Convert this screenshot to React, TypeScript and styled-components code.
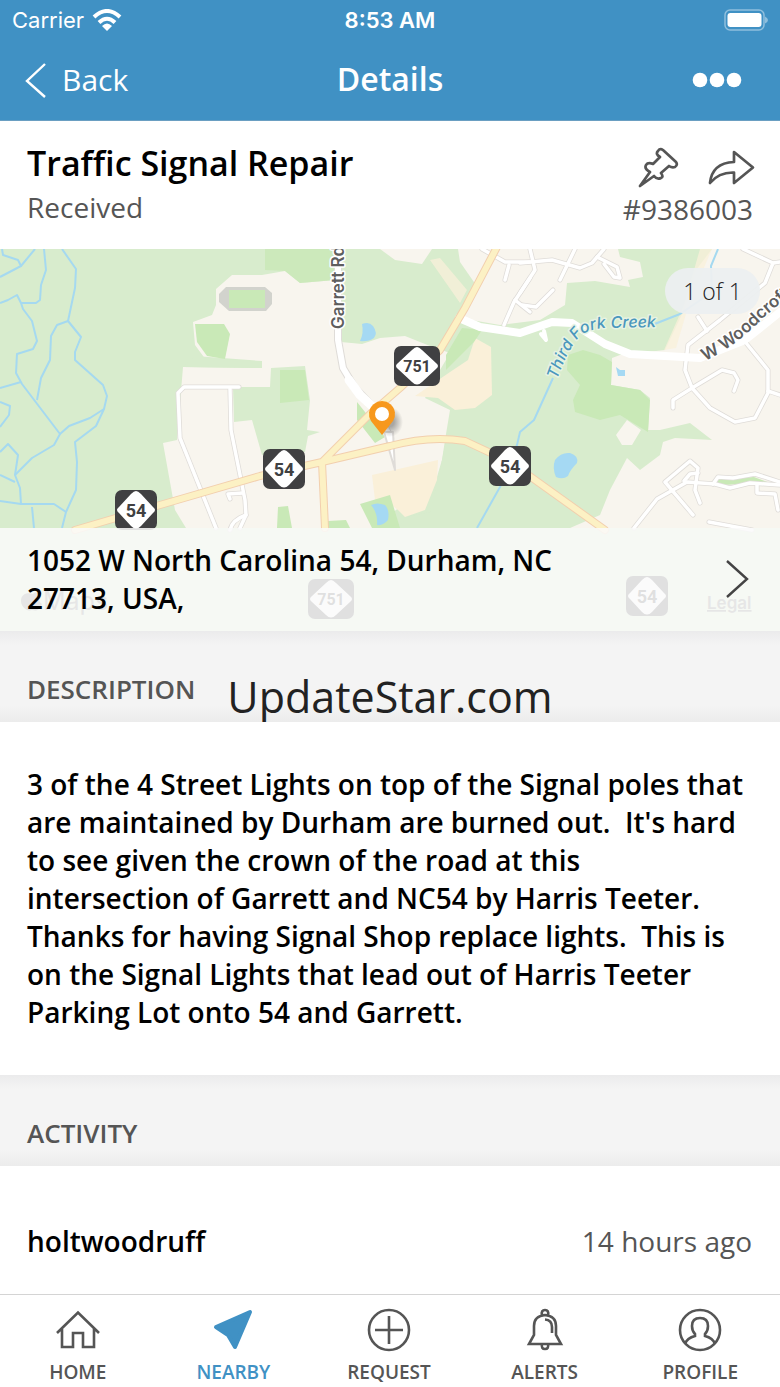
import React from "react";
import styled, { createGlobalStyle } from "styled-components";

const blue = "#4091c4";
const grey = "#555555";

const GlobalStyle = createGlobalStyle`
  * { box-sizing: border-box; }
  body {
    margin: 0;
    background: #ffffff;
    color: #000000;
    font-family: "Open Sans", "Noto Sans", sans-serif;
  }
  button { font: inherit; color: inherit; border: 0; padding: 0; background: none; cursor: pointer; }
  h1, h2, h3, p { margin: 0; }
`;

const Screen = styled.div`
  display: flex;
  flex-direction: column;
  min-height: 100vh;
`;

const Header = styled.header`
  background: ${blue};
  color: #ffffff;
  border-bottom: 1px solid #6a9fc2;
`;

const ThreeColumns = styled.div`
  display: grid;
  grid-template-columns: 1fr auto 1fr;
  align-items: center;
`;

const StatusBar = styled(ThreeColumns)`
  height: 39px;
  padding: 0 12px;
  font-family: Inter, Roboto, sans-serif;
  font-size: 22px;
`;

const Carrier = styled.span`
  display: flex;
  align-items: center;
  gap: 8px;
`;

const Clock = styled.span`
  font-weight: 600;
`;

const RightIcon = styled.svg`
  display: block;
  justify-self: end;
`;

const NavBar = styled(ThreeColumns)`
  height: 81px;
  padding: 0 24px;
`;

const BackButton = styled.button`
  display: flex;
  align-items: center;
  gap: 14px;
  justify-self: start;
  font-size: 30px;
  line-height: 40px;
`;

const NavTitle = styled.h1`
  font-size: 32px;
  line-height: 42px;
  padding-bottom: 2px;
  font-weight: 600;
`;

const MoreButton = styled.button`
  justify-self: end;
  margin-right: 14px;
`;

const Summary = styled.section`
  display: flex;
  justify-content: space-between;
  padding: 21px 27px 20px;
  height: 128px;
`;

const SummaryTitle = styled.h2`
  font-size: 34px;
  line-height: 42px;
  font-weight: 600;
`;

const Muted = styled.p`
  font-size: 28px;
  line-height: 46px;
  color: ${grey};
`;

const SummarySide = styled.div`
  display: flex;
  flex-direction: column;
  align-items: flex-end;
`;

const Actions = styled.div`
  display: flex;
  gap: 28px;
  height: 44px;
  padding-top: 5px;
  margin-right: -2px;
`;

const MapCard = styled.section`
  display: grid;
  overflow: hidden;
`;

const MapDrawing = styled.svg`
  grid-area: 1 / 1;
  display: block;
  width: 100%;
  height: 382px;
`;

const Counter = styled.span`
  grid-area: 1 / 1;
  align-self: start;
  justify-self: end;
  margin: 19px 20px 0 0;
  width: 95px;
  border-radius: 24px;
  background: rgba(236, 239, 240, 0.95);
  color: #222222;
  font-size: 23px;
  line-height: 46px;
  font-weight: 300;
  text-align: center;
`;

const AddressBar = styled.button`
  grid-area: 1 / 1;
  align-self: end;
  display: flex;
  align-items: center;
  justify-content: space-between;
  height: 103px;
  padding: 0 31px 2px 27px;
  background: rgba(250, 250, 250, 0.86);
  text-align: left;
`;

const Address = styled.span`
  max-width: 560px;
  font-size: 28px;
  line-height: 38px;
  font-weight: 600;
`;

const SectionHeading = styled.div`
  position: relative;
  overflow: hidden;
  height: 91px;
  padding: 39px 27px 0;
  background: linear-gradient(#ebebec, #f4f4f4 14px, #f4f4f4 74px, #ececec);
`;

const SectionTitle = styled.h3`
  font-size: 26px;
  line-height: 38px;
  font-weight: 600;
  color: ${grey};
`;

const Watermark = styled.span`
  position: absolute;
  inset: 35px 0 0;
  font-size: 43px;
  line-height: 62px;
  text-align: center;
  color: #222222;
`;

const Description = styled.p`
  padding: 43px 32px 44px 27px;
  font-size: 28px;
  line-height: 38px;
  font-weight: 600;
  white-space: pre-wrap;
`;

const ActivityRow = styled.article`
  display: flex;
  flex: 1;
  justify-content: space-between;
  padding: 56px 28px 34px 27px;
  font-size: 28px;
  line-height: 38px;
`;

const Author = styled.span`
  font-weight: 600;
`;

const When = styled.time`
  color: ${grey};
`;

const TabBar = styled.nav`
  position: sticky;
  bottom: 0;
  display: grid;
  grid-template-columns: repeat(5, 1fr);
  height: 93px;
  padding-right: 2px;
  border-top: 1px solid #d4d4d4;
  background: #ffffff;
`;

const Tab = styled.button<{ $active?: boolean }>`
  display: flex;
  flex-direction: column;
  align-items: center;
  padding-top: 13px;
  gap: 8px;
  font-size: 19px;
  line-height: 24px;
  font-weight: 600;
  color: ${(p) => (p.$active ? blue : grey)};
`;

const TabIcon = styled.svg`
  display: block;
  width: 46px;
  height: 44px;
  fill: none;
  stroke: currentColor;
  stroke-width: 2.6;
`;

const cream = "#f8f5ee";
const park = "#c9e9b7";
const sand = "#faf0d9";

function Shield({ x, y, label }: { x: number; y: number; label: string }) {
  const wide = label.length > 2;
  const half = wide ? 23 : 21;
  return (
    <g transform={`translate(${x} ${y})`}>
      <rect x={-half} y={-20} width={half * 2} height={40} rx={7} fill="#404042" />
      <path d={`M0-19Q2-19 5-16L${half - 4}-3Q${half} 0 ${half - 4} 3L5 16Q0 21-5 16L${4 - half} 3Q${-half} 0 ${4 - half}-3L-5-16Q-2-19 0-19Z`} fill="#fff" />
      <text
        y={wide ? 6 : 7}
        textAnchor="middle"
        fontFamily="Roboto, sans-serif"
        fontWeight="700"
        fontSize={wide ? 16 : 18}
        fill="#404042"
      >
        {label}
      </text>
    </g>
  );
}

const streams = [
  "M0 277L21 266L35 249",
  "M2 249L3 255L18 260L21 266",
  "M44 249L46 270L41 285L40 300L36 303L21 303",
  "M0 303L8 300L17 295L21 303L23 309L32 321L37 341L33 349L17 354L16 373L22 384L60 434L54 445L32 458L15 475",
  "M62 249L76 269L75 288L68 321L81 337L75 352L75 360L103 385L107 396L104 409L96 426L75 442L77 462L76 490L66 512L62 528",
  "M68 321L57 325L51 336L50 360L41 378L37 400",
  "M60 434L69 426L90 418L104 409",
  "M0 388L21 382",
  "M0 402L10 406L9 415L0 427",
  "M0 452L8 444L18 455L15 475L20 488L21 504L0 501",
  "M0 475L15 482",
  "M21 504L54 504L66 512",
  "M32 507L34 528",
];

const streets = [
  "M216 528L180 438L178 393L184 387L239 387",
  "M230 389L231 430L245 500L246 515L240 528",
  "M243 493L228 494L230 499",
  "M246 515Q232 520 230 530",
  "M520 263L552 260L580 268L592 263L604 249",
  "M530 249L535 270L520 293",
  "M575 249L560 280",
  "M597 257L617 267L620 278L614 277L604 264",
  "M522 305L536 307L553 290",
  "M482 249L505 262L530 262",
  "M509 265L505 280",
  "M530 278L514 302L504 325",
  "M515 300L530 312",
  "M743 249L773 263L780 262",
  "M773 263L765 283L720 320L688 345L685 370L692 388L673 400L673 408",
  "M692 388L722 370L734 373L738 380L734 391",
  "M692 388L710 408L735 422L755 418L768 393L768 370L742 338",
  "M768 391L780 395",
  "M698 317L707 331",
  "M634 528L657 499L687 482L715 484L730 488L750 483L780 485",
  "M693 515L665 482L690 461L698 468L695 490L700 503",
  "M713 484L718 477L733 478L755 474L780 482",
  "M684 481L690 474L698 473",
  "M757 484L757 493L775 494L778 510",
  "M709 522L752 530",
];

function TownMap() {
  return (
    <MapDrawing viewBox="0 249 780 382" preserveAspectRatio="xMidYMid slice" role="img" aria-label="Map of the reported location">
      <defs>
        <radialGradient id="pin-shadow">
          <stop offset="0.3" stopColor="#666" stopOpacity="0.55" />
          <stop offset="1" stopColor="#666" stopOpacity="0" />
        </radialGradient>
      </defs>
      <rect y="249" width="780" height="382" fill="#d8eccd" />
      <g fill={cream}>
        <path d="M216 289L232 275L262 275L285 271L300 283L335 280L341 342L362 344L380 338L405 336L430 346L450 353L440 370L425 398L450 410L445 440L442 460L436 480L372 528L186 528L175 510L163 443L177 440L183 367L260 368L260 363L206 360L195 345L193 322L212 315L216 305Z" />
        <path d="M380 249L395 260L422 264L432 249Z" />
        <path d="M458 249L460 262L476 285L460 318L500 325L540 320L565 305L567 283L595 281L630 287L628 280L643 277L640 262L620 257L618 249Z" />
        <path d="M712 249L696 270L684 310L665 350L620 355L612 358L611 385L640 390L650 398L648 430L660 430L690 423L712 440L675 438L663 442L660 455L640 470L627 458L610 490L600 515L570 528H780V249Z" />
      </g>
      <path d="M195 356L262 361L262 368L183 367ZM233 387L270 387L271 368L305 366L310 400L307 430L320 432L308 436L305 452L262 455L252 420L234 422Z" fill="#d8eccd" />
      <path d="M400 528L405 517L430 512L440 470L446 440L470 440L470 631L180 631V528Z" fill="#d8eccd" />
      <g fill={sand}>
        <path d="M475 338L491 347L492 395L475 408L455 410L438 398L415 396L450 372L468 360Z" />
        <path d="M372 475L438 460L437 480L425 510L405 517L398 510L385 500L375 500Z" />
        <path d="M430 260L460 303L467 290L440 258ZM700 249H712L690 300L676 348L664 350L684 305Z" opacity=".75" />
      </g>
      <g fill={park}>
        <path d="M265 249H335V280L300 283L285 271L265 270Z" opacity=".8" />
        <path d="M195 324H224L230 334L225 359L207 356L197 342Z" />
        <path d="M280 370L305 370L309 400L280 403Z" />
        <path d="M357 402L385 437L375 443L357 420ZM446 355L462 328L482 330L474 342L446 370Z" />
        <path d="M568 355L583 350L600 355L612 362L611 385L640 390L650 400L648 432L620 415L600 420L575 412L573 400L580 385L567 370Z" />
        <path d="M360 504L390 495L400 528H372ZM278 507L288 506L292 528H277ZM328 521L346 520L350 528H328Z" />
        <path d="M718 479L754 477L770 483L740 484L724 485L715 484Z" />
      </g>
      <path d="M616 435L627 420L641 430L632 445L622 445Z" fill={cream} />
      <path d="M226 287H265L272 293V304L266 311H229L219 302V294Z" fill="#d2d3cd" />
      <rect x="229" y="290" width="36" height="18" fill={park} />
      <g fill="#a5d9f3">
        <path d="M362 324Q369 321 373 326Q378 333 374 338Q368 342 360 341Q364 333 362 324Z" />
        <path d="M555 460Q561 452 570 453Q579 456 577 463Q570 470 568 476Q563 480 556 477Q552 468 555 460Z" />
        <path d="M371 505Q377 502 385 505Q390 510 388 520Q383 526 377 525Q378 513 371 505Z" />
        <path d="M616 367L620 370H625V376H618Z" />
      </g>
      <g fill="none" stroke="#a5d9f0" strokeWidth="2" strokeLinejoin="round">
        {streams.map((d) => (
          <path key={d} d={d} />
        ))}
        <path d="M718 249L711 266L712 292L680 314L652 325M553 378L534 420L520 432L517 445L500 487L477 528" />
      </g>
      <g fill="none" strokeLinejoin="round" strokeLinecap="round">
        <g stroke="#dfdcd8" strokeWidth="5">
          {streets.map((d) => (
            <path key={d} d={d} />
          ))}
        </g>
        <g stroke="#fff" strokeWidth="3.500">
          {streets.map((d) => (
            <path key={d} d={d} />
          ))}
        </g>
        <path d="M338 249V340L343 368L355 388L378 412L390 438" stroke="#dfdcd8" strokeWidth="8" />
        <path d="M338 249V340L343 368L355 388L378 412L390 438" stroke="#fff" strokeWidth="6" />
        <path d="M349 380L360 395L372 406" stroke="#fff" strokeWidth="9" />
        <path d="M384 432L395 470L393 432Z" stroke="#dfdcd8" strokeWidth="2" fill="#fff" />
        <path d="M459 318L480 327L520 333L552 322L572 323L605 344L630 354L700 358L745 340L780 312" stroke="#fff" strokeWidth="8" />
        <path d="M541 334L546 340L544 331" stroke="#fff" strokeWidth="4" />
        {[
          { color: "#f2cfae", width: 8 },
          { color: "#fcf1c4", width: 6 },
        ].map(({ color, width }) => (
          <path
            key={color}
            stroke={color}
            strokeWidth={width}
            d="M497 247L465 308L440 350L400 388L370 414L322 462L325 528M75 530L160 505L260 476L322 462L390 446Q430 435 465 441L510 462L605 530"
          />
        ))}
      </g>
      <g fontFamily="Inter, sans-serif" fontSize="17" fontWeight="600" stroke="#fff" strokeWidth="3" paintOrder="stroke" strokeLinejoin="round">
        <path id="creek-label" d="M557 380Q568 348 581 335Q590 329 606 328L665 327" fill="none" stroke="none" />
        <path id="street-label" d="M705 361Q735 347 763 318L830 262" fill="none" stroke="none" />
        <text transform="translate(344 329) rotate(-90)" fill="#5e5e5e">
          Garrett Rd
        </text>
        <text fontSize="16" fontWeight="500" fontStyle="italic" fill="#4a97bd" stroke="#e6f3e3">
          <textPath href="#creek-label">Third Fork Creek</textPath>
        </text>
        <text fill="#5e5e5e">
          <textPath href="#street-label">W Woodcroft</textPath>
        </text>
      </g>
      <Shield x={417} y={366} label="751" />
      <Shield x={284} y={469} label="54" />
      <Shield x={136} y={510} label="54" />
      <Shield x={510} y={466} label="54" />
      <Shield x={331} y={599} label="751" />
      <Shield x={647} y={596} label="54" />
      <ellipse cx="390" cy="422" rx="13" ry="15" fill="url(#pin-shadow)" />
      <path d="M382 435L371 421A13 13 0 1 1 393 421Z" fill="#f7981d" />
      <circle cx="382" cy="414" r="7" fill="#fff" />
      <g fontFamily="Inter, sans-serif" fill="#6a6a6a">
        <path d="M33 594C36 591 40 593 41 596C38 599 39 602 42 604C39 611 36 611 32 610C26 612 21 606 21 601C21 594 27 592 33 594Z" />
        <text x="43" y="610" fontSize="25">Maps</text>
        <text x="707" y="609" fontSize="17" fontWeight="600" textDecoration="underline">Legal</text>
      </g>
    </MapDrawing>
  );
}

export default function App() {
  return (
    <Screen>
      <GlobalStyle />
      <Header>
        <StatusBar>
          <Carrier>
            Carrier
            <svg width="30" height="22" viewBox="0 0 30 22" fill="none" stroke="#fff" strokeWidth="4">
              <path d="M2 8Q15-4 28 8M7 13.500Q15 6 23 13.500" />
              <path d="M10 17Q15 12 20 17L15 22Z" fill="#fff" stroke="none" />
            </svg>
          </Carrier>
          <Clock>8:53 AM</Clock>
          <RightIcon width="44" height="22" viewBox="0 0 44 22">
            <rect x="1" y="1" width="39" height="20" rx="5" fill="none" stroke="#8fbfdd" strokeWidth="1.500" />
            <rect x="3.500" y="4" width="34" height="14" rx="3" fill="#fff" />
            <path d="M41 7.500Q44 9 44 11T41 14.500Z" fill="#8fbfdd" />
          </RightIcon>
        </StatusBar>
        <NavBar>
          <BackButton>
            <svg width="24" height="36" viewBox="0 0 24 36" fill="none" stroke="#fff" strokeWidth="2.400">
              <path d="M21 2L3 19L21 35" />
            </svg>
            Back
          </BackButton>
          <NavTitle>Details</NavTitle>
          <MoreButton aria-label="More">
            <RightIcon width="50" height="16" viewBox="0 0 50 16" fill="#fff">
              <circle cx="8" cy="8" r="7.300" />
              <circle cx="25" cy="8" r="7.300" />
              <circle cx="42" cy="8" r="7.300" />
            </RightIcon>
          </MoreButton>
        </NavBar>
      </Header>

      <Summary>
        <div>
          <SummaryTitle>Traffic Signal Repair</SummaryTitle>
          <Muted>Received</Muted>
        </div>
        <SummarySide>
          <Actions>
            <button aria-label="Pin">
              <svg width="42" height="42" viewBox="0 0 42 42" fill="none" stroke={grey} strokeWidth="2.700" strokeLinejoin="round">
                <path d="M3 39L13 25Q7 22 9 18Q11 15 16 17L23 10Q18 7 21 4Q23 1 26 3L39 15Q41 18 38 20Q35 21 32 19L24 26Q27 30 24 31Q20 33 17 29Z" />
              </svg>
            </button>
            <button aria-label="Share">
              <svg width="48" height="42" viewBox="0 0 48 42" fill="none" stroke={grey} strokeWidth="2.700" strokeLinejoin="round">
                <path d="M27 5L46 20.500L27 36V25.500Q12 25 3 36Q5 16 27 15Z" />
              </svg>
            </button>
          </Actions>
          <Muted>#9386003</Muted>
        </SummarySide>
      </Summary>

      <MapCard>
        <TownMap />
        <Counter>1 of 1</Counter>
        <AddressBar>
          <Address>1052 W North Carolina 54, Durham, NC 27713, USA,</Address>
          <svg width="24" height="40" viewBox="0 0 24 40" fill="none" stroke="#444" strokeWidth="2.400">
            <path d="M2 2L22 20L2 38" />
          </svg>
        </AddressBar>
      </MapCard>

      <SectionHeading>
        <SectionTitle>DESCRIPTION</SectionTitle>
        <Watermark>UpdateStar.com</Watermark>
      </SectionHeading>
      <Description>
        {"3 of the 4 Street Lights on top of the Signal poles that are maintained by Durham are burned out.  It's hard to see given the crown of the road at this intersection of Garrett and NC54 by Harris Teeter. Thanks for having Signal Shop replace lights.  This is on the Signal Lights that lead out of Harris Teeter Parking Lot onto 54 and Garrett."}
      </Description>

      <SectionHeading>
        <SectionTitle>ACTIVITY</SectionTitle>
      </SectionHeading>
      <ActivityRow>
        <Author>holtwoodruff</Author>
        <When>14 hours ago</When>
      </ActivityRow>

      <TabBar>
        <Tab>
          <TabIcon viewBox="0 0 46 44">
            <path d="M2 25L23 4.500L44 25M7 21V39H18V25H28V39H39V21" />
          </TabIcon>
          HOME
        </Tab>
        <Tab $active>
          <TabIcon viewBox="0 0 46 44">
            <path d="M6 19L40 4L25 39L18 27Z" fill="currentColor" strokeLinejoin="round" strokeWidth="4" />
          </TabIcon>
          NEARBY
        </Tab>
        <Tab>
          <TabIcon viewBox="0 0 46 44">
            <circle cx="23" cy="22" r="20" />
            <path d="M9 22H37M23 8V36" />
          </TabIcon>
          REQUEST
        </Tab>
        <Tab>
          <TabIcon viewBox="0 0 46 44">
            <path d="M7 36H39L34 27V18Q34 8 23 7Q12 8 12 18V27ZM20 7Q19 2 23 2T26 7M20 36Q19 41 23 41T26 36M23 11.500Q30 12 30 19V25" />
          </TabIcon>
          ALERTS
        </Tab>
        <Tab>
          <TabIcon viewBox="0 0 46 44">
            <circle cx="23" cy="22" r="20" />
            <path d="M8 36Q10 30 18 28V26Q15 23 15 18Q15 10 23 10T31 18Q31 23 28 26V28Q36 30 38 36" />
          </TabIcon>
          PROFILE
        </Tab>
      </TabBar>
    </Screen>
  );
}
